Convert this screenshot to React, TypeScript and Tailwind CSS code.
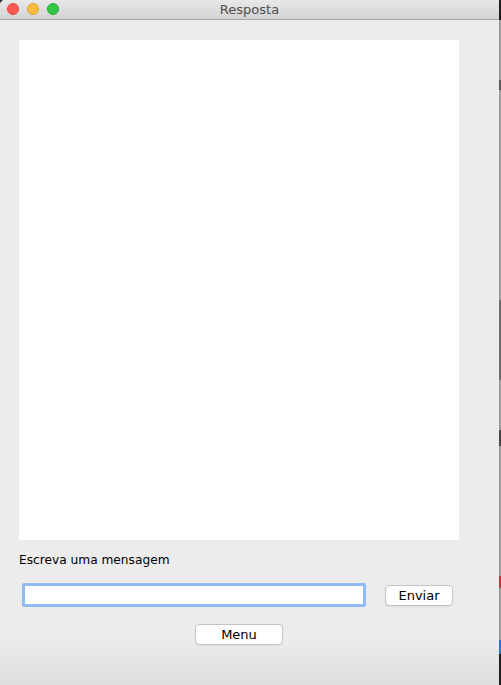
export default function App() {
  return (
    <div className="flex w-[501px] h-[685px] bg-[#2b2b2b]" style={{ fontFamily: '"DejaVu Sans", "Liberation Sans", sans-serif' }}>
      {/* Window */}
      <div className="flex flex-col w-[499px] h-full bg-[#ececec] rounded-tl-[5px] overflow-hidden">
        {/* Title bar */}
        <div className="relative flex items-center justify-center h-[20px] shrink-0 bg-gradient-to-b from-[#e8e8e8] to-[#d3d3d3] border-b border-[#a9a9a9]">
          <div className="absolute left-[7px] top-[3px] flex gap-[8px]">
            <span className="w-[12px] h-[12px] rounded-full bg-[#fc5753] border border-[#df4744]" />
            <span className="w-[12px] h-[12px] rounded-full bg-[#fdbc40] border border-[#de9f34]" />
            <span className="w-[12px] h-[12px] rounded-full bg-[#33c748] border border-[#27aa35]" />
          </div>
          <span className="text-[13px] text-[#4d4d4d] leading-none">Resposta</span>
        </div>

        {/* Content */}
        <div className="flex flex-col flex-1 bg-gradient-to-b from-[#ececec] from-[93%] to-[#dedede] pl-[19px]">
          <div className="mt-[20px] w-[440px] h-[500px] bg-white" />

          <p className="mt-[12px] text-[12.2px] text-black leading-[16px]">Escreva uma mensagem</p>

          <div className="flex items-center mt-[15px]">
            <input
              className="ml-[3px] w-[344px] h-[24px] bg-white border-[3px] border-[#8fbcf3] rounded-[2px] outline-none"
              defaultValue=""
            />
            <button className="ml-[19px] w-[68px] h-[21px] bg-white border border-[#c4c4c4] rounded-[4px] text-[13px] text-black leading-none shadow-[0_1px_0_rgba(0,0,0,0.05)]">
              Enviar
            </button>
          </div>

          <div className="flex mt-[17px] pl-[176px]">
            <button className="w-[88px] h-[21px] bg-white border border-[#c4c4c4] rounded-[4px] text-[13px] text-black leading-none shadow-[0_1px_0_rgba(0,0,0,0.05)]">
              Menu
            </button>
          </div>
        </div>
      </div>

      {/* Background peeking at right edge */}
      <div className="flex flex-col w-[2px] h-full bg-[#9c9c9c]">
        <div className="h-[20px] bg-[#1e1e1e]" />
        <div className="h-[60px]" />
        <div className="h-[10px] bg-[#5a5a5a]" />
        <div className="h-[210px]" />
        <div className="h-[80px] bg-[#6a6a6a]" />
        <div className="h-[50px]" />
        <div className="h-[16px] bg-[#444]" />
        <div className="h-[130px]" />
        <div className="h-[12px] bg-[#b83a3a]" />
        <div className="h-[52px]" />
        <div className="h-[14px] bg-[#2a73c9]" />
        <div className="flex-1 bg-[#1e1e1e]" />
      </div>
    </div>
  );
}
